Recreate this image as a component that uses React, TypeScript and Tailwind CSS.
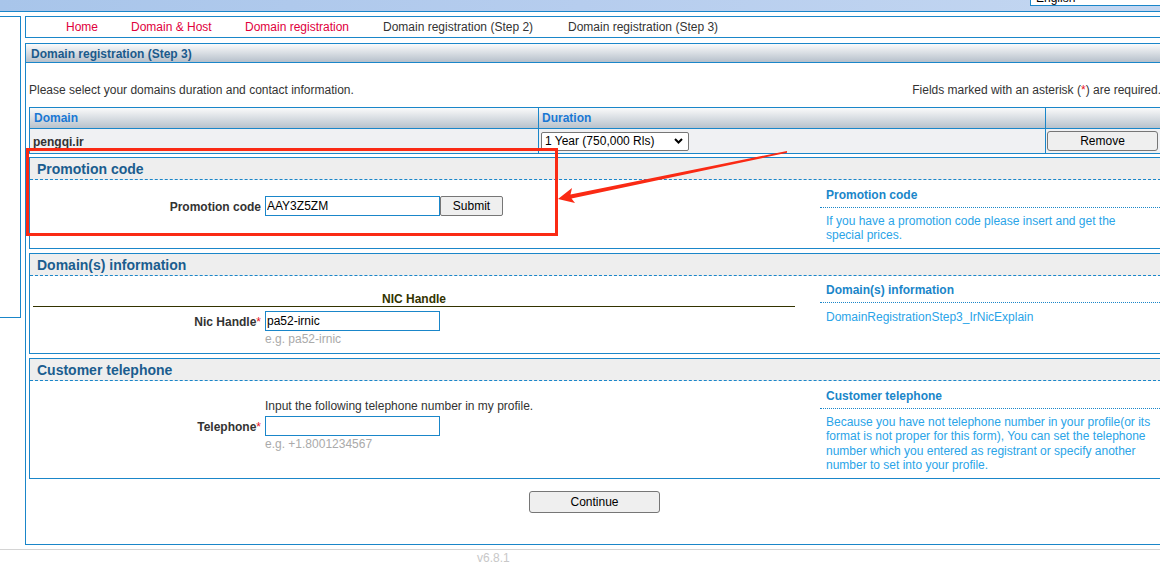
import React from "react";

function Label({ text, req }: { text: string; req?: boolean }) {
  return (
    <div className="w-[228px] shrink-0 text-right font-bold text-[#333] pt-[1px]">
      {text}
      {req && <span className="font-normal text-[#e8141e]">*</span>}
    </div>
  );
}

function SideHelp({
  title,
  lines,
  pt,
  mt,
}: {
  title: string;
  lines: string[];
  pt: string;
  mt: string;
}) {
  return (
    <div className={`flex-1 ${pt}`}>
      <div className="pb-[5px] pl-[6px] border-b border-dotted border-[#1a86c9] font-bold text-[#1a86c9] leading-[14px]">
        {title}
      </div>
      <div className={`${mt} pl-[6px] leading-[14.3px] text-[#2aa4e8]`}>
        {lines.map((l, i) => (
          <div key={i} className="whitespace-nowrap">
            {l}
          </div>
        ))}
      </div>
    </div>
  );
}

function SectionHeader({ title }: { title: string }) {
  return (
    <div className="h-[22px] bg-[#eeeeee] border-b border-dashed border-[#1a86c9] pl-[7px] text-[14px] font-bold leading-[23px] text-[#1b5d8f]">
      {title}
    </div>
  );
}

export default function App() {
  return (
    <div className="relative w-[1160px] h-[573px] overflow-hidden bg-white text-[12px] leading-[14px] text-[#333] font-['Liberation_Sans',Arial,sans-serif]">
      {/* top bar */}
      <div className="h-[12px] border-b border-[#1a86c9] bg-[linear-gradient(to_right,#a8c5ea,#b6cdee,#c4d7f1)] flex justify-end items-start overflow-hidden">
        <div className="mt-[-9px] h-[15px] w-[140px] mr-[-10px] bg-white border border-[#1a86c9] pl-[5px] leading-[13px] text-black">
          English
        </div>
      </div>

      <div className="mt-[4px] flex items-start">
        {/* left sidebar */}
        <div className="w-[21px] h-[302px] shrink-0 border-t border-r border-b border-[#1a86c9]" />

        {/* main column */}
        <div className="ml-[4px] w-[1146px] shrink-0 flex flex-col">
          {/* nav */}
          <div className="h-[22px] border border-[#1a86c9] flex items-center pl-[40px] whitespace-nowrap">
            <div className="w-[65px] text-[#e0003c]">Home</div>
            <div className="w-[114px] text-[#e0003c]">Domain &amp; Host</div>
            <div className="w-[138px] text-[#e0003c]">Domain registration</div>
            <div className="w-[185px] text-[#333]">Domain registration (Step 2)</div>
            <div className="text-[#333]">Domain registration (Step 3)</div>
          </div>

          {/* content box */}
          <div className="mt-[5px] h-[502px] border border-[#1a86c9] flex flex-col">
            <div className="h-[19px] shrink-0 border-b border-[#1a86c9] bg-[linear-gradient(#fbfbfb,#b6c0cb)] pl-[5px] font-bold leading-[20px] text-[#1b5a8c]">
              Domain registration (Step 3)
            </div>

            <div className="mt-[20px] pl-[3px] pr-[9px] flex justify-between">
              <div>Please select your domains duration and contact information.</div>
              <div>
                Fields marked with an asterisk (<span className="text-[#e8141e]">*</span>) are required.
              </div>
            </div>

            {/* table */}
            <div className="mt-[10px] mx-[3px] border-t border-l border-[#1a86c9]">
              <div className="flex h-[21px]">
                <div className="w-[509px] shrink-0 border-r border-b border-[#1a86c9] bg-[linear-gradient(#fafafa,#b8c2cc)] pl-[4px] font-bold leading-[20px] text-[#1a78d4]">
                  Domain
                </div>
                <div className="w-[507px] shrink-0 border-r border-b border-[#1a86c9] bg-[linear-gradient(#fafafa,#b8c2cc)] pl-[3px] font-bold leading-[20px] text-[#1a78d4]">
                  Duration
                </div>
                <div className="flex-1 border-r border-b border-[#1a86c9] bg-[linear-gradient(#fafafa,#b8c2cc)]" />
              </div>
              <div className="flex h-[25px] bg-[#f0f1f3]">
                <div className="w-[509px] shrink-0 border-r border-b border-[#1a86c9] pl-[3px] pt-[2px] flex items-center font-bold text-[#333]">
                  pengqi.ir
                </div>
                <div className="w-[507px] shrink-0 border-r border-b border-[#1a86c9] flex items-center">
                  <div className="ml-[2px] w-[148px] h-[19px] border border-[#767676] rounded-[2px] bg-white flex items-center justify-between pl-[3px] pr-[5px] text-black">
                    <span>1 Year (750,000 Rls)</span>
                    <svg width="9" height="6" viewBox="0 0 9 6">
                      <path d="M1 1 L4.5 4.5 L8 1" fill="none" stroke="#000" strokeWidth="2" />
                    </svg>
                  </div>
                </div>
                <div className="flex-1 border-r border-b border-[#1a86c9] flex items-center">
                  <button className="ml-[1px] w-[111px] h-[20px] border border-[#767676] rounded-[3px] bg-[#efefef] text-black">
                    Remove
                  </button>
                </div>
              </div>
            </div>

            {/* Promotion code */}
            <div className="mt-[3px] mx-[3px] border border-[#1a86c9]">
              <SectionHeader title="Promotion code" />
              <div className="flex h-[68px]">
                <div className="w-[790px] shrink-0 pl-[3px] pr-[25px] pt-[16px]">
                  <div className="flex items-center">
                    <Label text="Promotion code" />
                    <input
                      readOnly
                      value="AAY3Z5ZM"
                      className="ml-[4px] w-[175px] h-[20px] border border-[#1a86c9] px-[1px] text-black outline-none"
                    />
                    <button className="w-[63px] h-[20px] border border-[#767676] rounded-[2px] bg-[#efefef] text-black">
                      Submit
                    </button>
                  </div>
                </div>
                <SideHelp
                  title="Promotion code"
                  pt="pt-[8px]"
                  mt="mt-[6px]"
                  lines={["If you have a promotion code please insert and get the", "special prices."]}
                />
              </div>
            </div>

            {/* Domain(s) information */}
            <div className="mt-[4px] mx-[3px] border border-[#1a86c9]">
              <SectionHeader title="Domain(s) information" />
              <div className="flex h-[77px]">
                <div className="w-[790px] shrink-0 pl-[3px] pr-[25px] pt-[16px]">
                  <div className="h-[15px] border-b border-[#333300] text-center font-bold text-[#333300] leading-[15px]">
                    NIC Handle
                  </div>
                  <div className="mt-[4px] flex items-center">
                    <Label text="Nic Handle" req />
                    <input
                      readOnly
                      value="pa52-irnic"
                      className="ml-[4px] w-[175px] h-[20px] border border-[#1a86c9] px-[1px] text-black outline-none"
                    />
                  </div>
                  <div className="mt-[1px] pl-[232px] text-[#aaaaaa]">e.g. pa52-irnic</div>
                </div>
                <SideHelp
                  title="Domain(s) information"
                  pt="pt-[7px]"
                  mt="mt-[7px]"
                  lines={["DomainRegistrationStep3_IrNicExplain"]}
                />
              </div>
            </div>

            {/* Customer telephone */}
            <div className="mt-[4px] mx-[3px] border border-[#1a86c9]">
              <SectionHeader title="Customer telephone" />
              <div className="flex h-[97px]">
                <div className="w-[790px] shrink-0 pl-[3px] pr-[25px] pt-[18px]">
                  <div className="pl-[232px]">Input the following telephone number in my profile.</div>
                  <div className="mt-[3px] flex items-center">
                    <Label text="Telephone" req />
                    <input
                      readOnly
                      value=""
                      className="ml-[4px] w-[175px] h-[20px] border border-[#1a86c9] px-[1px] text-black outline-none"
                    />
                  </div>
                  <div className="mt-[1px] pl-[232px] text-[#aaaaaa]">e.g. +1.8001234567</div>
                </div>
                <SideHelp
                  title="Customer telephone"
                  pt="pt-[8px]"
                  mt="mt-[6px]"
                  lines={[
                    "Because you have not telephone number in your profile(or its",
                    "format is not proper for this form), You can set the telephone",
                    "number which you entered as registrant or specify another",
                    "number to set into your profile.",
                  ]}
                />
              </div>
            </div>

            <div className="mt-[12px] pl-[503px]">
              <button className="w-[131px] h-[22px] border border-[#767676] rounded-[3px] bg-[#efefef] text-black">
                Continue
              </button>
            </div>
          </div>
        </div>
      </div>

      {/* footer */}
      <div className="mt-[4px] border-t border-[#d4d4d4] pt-[1px] pl-[477px] text-[#c8c8c8]">v6.8.1</div>

      {/* annotation overlay */}
      <div className="absolute left-[26px] top-[148px] w-[532px] h-[88px] border-[3px] border-[#fa2a14] pointer-events-none" />
      <svg className="absolute left-0 top-0 pointer-events-none" width="1160" height="573" viewBox="0 0 1160 573">
        <path
          d="M558 199 L572 188 L570.5 194.5 L787 151 L787 152.8 L571.5 198.5 L575 203 Z"
          fill="#fa2a14"
        />
      </svg>
    </div>
  );
}
